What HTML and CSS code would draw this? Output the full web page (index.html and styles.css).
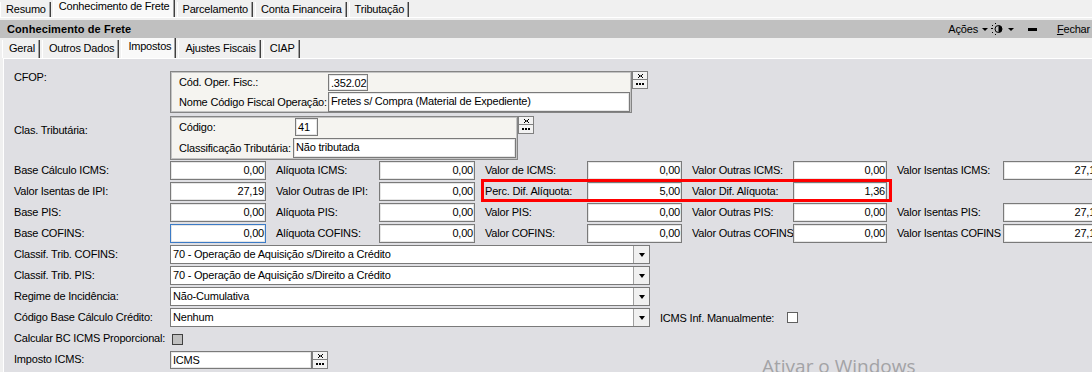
FILE: index.html
```html
<!DOCTYPE html>
<html>
<head>
	<meta charset="utf-8">
	<title>Conhecimento de Frete - Impostos</title>
	<link rel="stylesheet" href="styles.css">
</head>
<body>
	<div class="tabs top">
		<span class="tab">Resumo</span>
		<span class="tab on">Conhecimento de Frete</span>
		<span class="tab">Parcelamento</span>
		<span class="tab">Conta Financeira</span>
		<span class="tab">Tributação</span>
	</div>
	<div class="bar">
		<b>Conhecimento de Frete</b>
		<div class="acts">
			<span>Ações</span>
			<span class="arr"></span>
			<svg class="ico" width="13" height="12" viewBox="0 0 13 12">
				<rect x="0" y="5" width="2" height="1"/>
				<rect x="1" y="2" width="1" height="1"/>
				<rect x="1" y="9" width="1" height="1"/>
				<rect x="4" y="0" width="1" height="1"/>
				<rect x="4" y="11" width="1" height="1"/>
				<circle cx="7.5" cy="6" r="3.5" fill="none" stroke="#000"/>
				<path d="M7.5 2.5 A3.5 3.5 0 0 1 7.5 9.5 Z"/>
			</svg>
			<span class="arr"></span>
			<span class="dash"></span>
			<span class="close"><u>F</u>echar</span>
		</div>
	</div>
	<div class="tabs sub">
		<span class="tab">Geral</span>
		<span class="tab">Outros Dados</span>
		<span class="tab on">Impostos</span>
		<span class="tab">Ajustes Fiscais</span>
		<span class="tab">CIAP</span>
	</div>

	<div class="panel">
		<div class="line">
			<div class="lbl top1">CFOP:</div>
			<div class="grp cfop">
				<div class="grow r1">
					<span class="glbl">Cód. Oper. Fisc.:</span>
					<div class="in left small">.352.02</div>
				</div>
				<div class="grow r2">
					<span class="glbl">Nome Código Fiscal Operação:</span>
					<div class="in left wide">Fretes s/ Compra (Material de Expediente)</div>
				</div>
			</div>
			<div class="btns">
				<div class="bt"><svg width="5" height="4" viewBox="0 0 5 4"><path d="M0 0h1v1H0zM4 0h1v1H4zM1 1h1v1H1zM3 1h1v1H3zM2 1.5h1v1H2zM1 2h1v1H1zM3 2h1v1H3zM0 3h1v1H0zM4 3h1v1H4z"/></svg></div>
				<div class="bt"><svg width="8" height="2" viewBox="0 0 8 2"><path d="M0 0h2v2H0zM3 0h2v2H3zM6 0h2v2H6z"/></svg></div>
			</div>
		</div>

		<div class="line clasline">
			<div class="lbl top2">Clas. Tributária:</div>
			<div class="grp clas">
				<div class="grow r1">
					<span class="glbl">Código:</span>
					<div class="in left code">41</div>
				</div>
				<div class="grow r2">
					<span class="glbl">Classificação Tributária:</span>
					<div class="in left wide">Não tributada</div>
				</div>
			</div>
			<div class="btns">
				<div class="bt"><svg width="5" height="4" viewBox="0 0 5 4"><path d="M0 0h1v1H0zM4 0h1v1H4zM1 1h1v1H1zM3 1h1v1H3zM2 1.5h1v1H2zM1 2h1v1H1zM3 2h1v1H3zM0 3h1v1H0zM4 3h1v1H4z"/></svg></div>
				<div class="bt"><svg width="8" height="2" viewBox="0 0 8 2"><path d="M0 0h2v2H0zM3 0h2v2H3zM6 0h2v2H6z"/></svg></div>
			</div>
		</div>

		<div class="form">
			<div class="lb first">Base Cálculo ICMS:</div>
			<div class="in">0,00</div>
			<div class="lb">Alíquota ICMS:</div>
			<div class="in">0,00</div>
			<div class="lb">Valor de ICMS:</div>
			<div class="in">0,00</div>
			<div class="lb">Valor Outras ICMS:</div>
			<div class="in">0,00</div>
			<div class="lb">Valor Isentas ICMS:</div>
			<div class="in">27,19</div>

			<div class="lb first">Valor Isentas de IPI:</div>
			<div class="in">27,19</div>
			<div class="lb">Valor Outras de IPI:</div>
			<div class="in">0,00</div>
			<div class="hl">
				<div class="lb">Perc. Dif. Alíquota:</div>
				<div class="in">5,00</div>
				<div class="lb">Valor Dif. Alíquota:</div>
				<div class="in">1,36</div>
			</div>
			<div class="lb"></div>
			<div></div>

			<div class="lb first">Base PIS:</div>
			<div class="in">0,00</div>
			<div class="lb">Alíquota PIS:</div>
			<div class="in">0,00</div>
			<div class="lb">Valor PIS:</div>
			<div class="in">0,00</div>
			<div class="lb">Valor Outras PIS:</div>
			<div class="in">0,00</div>
			<div class="lb">Valor Isentas PIS:</div>
			<div class="in">27,19</div>

			<div class="lb first">Base COFINS:</div>
			<div class="in focus">0,00</div>
			<div class="lb">Alíquota COFINS:</div>
			<div class="in">0,00</div>
			<div class="lb">Valor COFINS:</div>
			<div class="in">0,00</div>
			<div class="lb">Valor Outras COFINS</div>
			<div class="in">0,00</div>
			<div class="lb">Valor Isentas COFINS</div>
			<div class="in">27,19</div>

			<div class="lb first">Classif. Trib. COFINS:</div>
			<div class="rest">
				<div class="sel"><span>70 - Operação de Aquisição s/Direito a Crédito</span><i class="dd"></i></div>
			</div>

			<div class="lb first">Classif. Trib. PIS:</div>
			<div class="rest">
				<div class="sel"><span>70 - Operação de Aquisição s/Direito a Crédito</span><i class="dd"></i></div>
			</div>

			<div class="lb first">Regime de Incidência:</div>
			<div class="rest">
				<div class="sel"><span>Não-Cumulativa</span><i class="dd"></i></div>
			</div>

			<div class="lb first">Código Base Cálculo Crédito:</div>
			<div class="rest">
				<div class="sel"><span>Nenhum</span><i class="dd"></i></div>
				<span class="side">ICMS Inf. Manualmente:</span>
				<span class="chk"></span>
			</div>

			<div class="lb first">Calcular BC ICMS Proporcional:</div>
			<div class="rest">
				<span class="chk gray"></span>
			</div>

			<div class="lb first">Imposto ICMS:</div>
			<div class="rest">
				<div class="in left imp">ICMS</div>
				<div class="btns">
					<div class="bt"><svg width="5" height="4" viewBox="0 0 5 4"><path d="M0 0h1v1H0zM4 0h1v1H4zM1 1h1v1H1zM3 1h1v1H3zM2 1.5h1v1H2zM1 2h1v1H1zM3 2h1v1H3zM0 3h1v1H0zM4 3h1v1H4z"/></svg></div>
					<div class="bt"><svg width="8" height="2" viewBox="0 0 8 2"><path d="M0 0h2v2H0zM3 0h2v2H3zM6 0h2v2H6z"/></svg></div>
				</div>
			</div>
		</div>
	</div>

	<div class="mark">Ativar o Windows</div>
</body>
</html>
```

FILE: styles.css
```css
*{
	box-sizing: border-box;
}
body{
	margin: 0;
	width: 1092px;
	height: 372px;
	overflow: hidden;
	position: relative;
	background: #f0f0f0;
	color: #000;
	font: 11px "Liberation Sans", Arial, sans-serif;
	letter-spacing: -0.2px;
}

/* abas */
.tabs{
	display: flex;
	align-items: flex-end;
}
.tabs.top{
	height: 18px;
	border-bottom: 1px solid #fff;
}
.tab{
	height: 15px;
	line-height: 14px;
	padding: 0 4px 0 5px;
	margin-right: 2px;
	border-left: 1px solid #fff;
	border-right: 1px solid #404040;
	box-shadow: inset -1px 0 #a0a0a0;
	white-space: nowrap;
}
.tab.on{
	height: 17px;
	line-height: 12px;
	background: #f9f9f9;
}
.tabs.sub{
	height: 20px;
	padding-left: 2px;
}
.tabs.sub .tab{
	height: 18px;
	line-height: 17px;
	padding: 0 4px 0 6px;
}
.tabs.sub .tab.on{
	height: 20px;
	line-height: 16px;
}

/* barra de titulo */
.bar{
	margin-top: 2px;
	height: 18px;
	background: #c0c0c0;
	display: flex;
	align-items: center;
	padding-left: 7px;
}
.bar b{
	font-size: 11px;
	letter-spacing: 0.1px;
}
.acts{
	margin-left: auto;
	display: flex;
	align-items: center;
	padding-right: 2px;
}
.arr{
	width: 0;
	height: 0;
	border-left: 3px solid transparent;
	border-right: 3px solid transparent;
	border-top: 3px solid #000;
	margin: 0 3px 0 4px;
}
.ico{
	display: block;
}
.dash{
	width: 9px;
	height: 3px;
	background: #000;
	margin: 0 20px 0 11px;
}
.close u{
	text-decoration: underline;
}

/* painel */
.panel{
	margin-left: 3px;
	width: 1120px;
	height: 314px;
	background: #dfdfe3;
	border-top: 1px solid #fff;
	border-left: 1px solid #fff;
	padding: 12px 0 0 10px;
}
.line{
	display: flex;
	align-items: flex-start;
}
.clasline{
	margin-top: 3px;
}
.lbl{
	width: 156px;
	line-height: 13px;
}
.top2{
	margin-top: 4px;
	line-height: 20px;
}
.grp{
	background: #f5f4f0;
	border: 1px solid #858585;
	box-shadow: inset 0 0 0 1px #c4c4c4;
	padding-left: 8px;
}
.cfop{
	width: 462px;
	height: 42px;
}
.clas{
	width: 348px;
	height: 44px;
}
.grow{
	display: flex;
	align-items: center;
}
.grow.r1{
	height: 20px;
}
.grow.r2{
	height: 20px;
}
.clas .grow.r2{
	height: 22px;
}
.glbl{
	white-space: nowrap;
	flex-shrink: 0;
}
.cfop .glbl{
	width: 149px;
}
.clas .glbl{
	width: 114px;
}
.small{
	width: 40px;
	height: 17px;
}
.code{
	width: 23px;
	height: 18px;
	margin-left: 2px;
}
.wide{
	flex: 1;
	height: 20px;
	margin-right: 1px;
}

/* botoes limpar / pesquisar */
.btns{
	display: flex;
	flex-direction: column;
}
.bt{
	width: 16px;
	height: 9px;
	background: #f2f2f2;
	border: 1px solid #808080;
	display: flex;
	align-items: center;
	justify-content: center;
}
.bt + .bt{
	border-top: none;
}
.bt svg{
	display: block;
}

/* campos */
.form{
	margin-top: 1px;
	display: grid;
	grid-template-columns: 156px 96px 113px 96px 112px 95px 111px 94px 116px 100px;
	grid-auto-rows: 19px;
	row-gap: 2px;
}
.lb{
	padding-left: 10px;
	line-height: 19px;
	white-space: nowrap;
	overflow: hidden;
}
.lb.first{
	padding-left: 0;
	overflow: visible;
}
.in{
	background: #fff;
	border: 1px solid #7a7a7a;
	box-shadow: inset 0 0 0 1px #e6e6e6;
	text-align: right;
	padding: 0 1px 0 2px;
	line-height: 17px;
	white-space: nowrap;
	overflow: hidden;
}
.in.left{
	text-align: left;
	line-height: 16px;
}
.in.focus{
	border-color: #3c7bc6;
}
.hl{
	grid-column: 5 / 9;
	display: grid;
	grid-template-columns: 112px 95px 111px 94px;
	position: relative;
}
.hl::after{
	content: "";
	position: absolute;
	left: 6px;
	right: -5px;
	top: -3px;
	bottom: -1px;
	border: 3px solid #f00;
}
.rest{
	grid-column: 2 / -1;
	display: flex;
	align-items: center;
}
.sel{
	width: 480px;
	height: 19px;
	background: #fff;
	border: 1px solid #7a7a7a;
	display: flex;
}
.sel span{
	flex: 1;
	padding-left: 2px;
	line-height: 17px;
}
.dd{
	width: 16px;
	background: #f0f0f0;
	border-left: 1px solid #a0a0a0;
	display: flex;
	align-items: center;
	justify-content: center;
}
.dd::before{
	content: "";
	border-left: 3px solid transparent;
	border-right: 3px solid transparent;
	border-top: 4px solid #000;
}
.side{
	margin-left: 10px;
	width: 127px;
	white-space: nowrap;
}
.chk{
	width: 11px;
	height: 11px;
	background: #fff;
	border: 1px solid #606060;
}
.chk.gray{
	margin-left: 2px;
	margin-top: 2px;
	background: #c0c0c0;
	border-color: #404040;
}
.imp{
	width: 142px;
	height: 18px;
	margin-top: 1px;
}
.rest .btns{
	align-self: flex-start;
	margin-top: 1px;
}

.mark{
	position: absolute;
	left: 762px;
	top: 354px;
	font: 19px "Open Sans", "Noto Sans", sans-serif;
	letter-spacing: 0;
	color: #a3a3a6;
	line-height: 24px;
}
```
